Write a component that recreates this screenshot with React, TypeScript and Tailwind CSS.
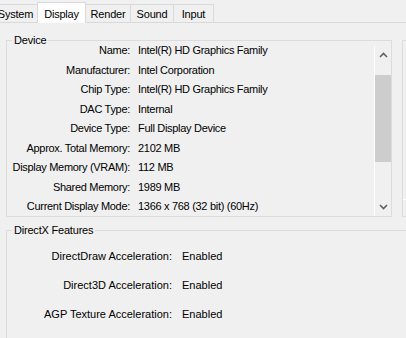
import React from "react";

const deviceRows: [string, string][] = [
  ["Name:", "Intel(R) HD Graphics Family"],
  ["Manufacturer:", "Intel Corporation"],
  ["Chip Type:", "Intel(R) HD Graphics Family"],
  ["DAC Type:", "Internal"],
  ["Device Type:", "Full Display Device"],
  ["Approx. Total Memory:", "2102 MB"],
  ["Display Memory (VRAM):", "112 MB"],
  ["Shared Memory:", "1989 MB"],
  ["Current Display Mode:", "1366 x 768 (32 bit) (60Hz)"],
];

const dxRows: [string, string][] = [
  ["DirectDraw Acceleration:", "Enabled"],
  ["Direct3D Acceleration:", "Enabled"],
  ["AGP Texture Acceleration:", "Enabled"],
];

function Chevron({ up }: { up: boolean }) {
  return (
    <svg width="9" height="6" viewBox="0 0 9 6">
      <path
        d={up ? "M1 5 L4.5 1.5 L8 5" : "M1 1 L4.5 4.5 L8 1"}
        fill="none"
        stroke="#606060"
        strokeWidth="1.6"
      />
    </svg>
  );
}

export default function App() {
  return (
    <div
      className="w-[406px] h-[338px] bg-[#f0f0f0] overflow-hidden text-[11px] tracking-[-0.2px] text-black flex flex-col"
      style={{ fontFamily: '"Liberation Sans", Arial, sans-serif' }}
    >
      {/* Tab strip */}
      <div className="flex items-end h-[22px] shrink-0">
        <div className="ml-[-7px] w-[45px] h-[18px] border border-b-0 border-[#d9d9d9] flex items-center justify-center pt-[1px]">
          System
        </div>
        <div className="relative z-10 ml-[-1px] w-[49px] h-[21px] mb-[-1px] bg-white border border-b-0 border-[#d9d9d9] flex items-start justify-center pt-[3px]">
          Display
        </div>
        <div className="ml-[-1px] w-[46px] h-[18px] border border-b-0 border-[#d9d9d9] flex items-center justify-center pt-[1px]">
          Render
        </div>
        <div className="ml-[-1px] w-[44px] h-[18px] border border-b-0 border-[#d9d9d9] flex items-center justify-center pt-[1px]">
          Sound
        </div>
        <div className="ml-[-1px] w-[41px] h-[18px] border border-b-0 border-[#d9d9d9] flex items-center justify-center pt-[1px]">
          Input
        </div>
      </div>
      <div className="h-px bg-[#d9d9d9] shrink-0" />

      {/* Device group + right box */}
      <div className="flex mt-[17px] shrink-0">
        <div className="relative ml-[6px] w-[386px] h-[177px] border border-[#dcdcdc] flex">
          <span className="absolute left-[5px] top-[-9px] px-[2px] bg-[#f0f0f0] leading-[16px]">
            Device
          </span>
          <div className="flex-1 flex flex-col tracking-[-0.3px]">
            {deviceRows.map(([k, v]) => (
              <div key={k} className="flex items-center h-[19.6px]">
                <div className="w-[123px] text-right whitespace-nowrap">{k}</div>
                <div className="ml-[8px] whitespace-nowrap">{v}</div>
              </div>
            ))}
          </div>
          <div className="mt-[5px] w-[17px] border-l border-white flex flex-col items-center">
            <div className="h-[18px] flex items-center justify-center">
              <Chevron up />
            </div>
            <div className="mt-[11px] w-[16px] h-[87px] bg-[#cdcdcd]" />
            <div className="flex-1" />
            <div className="h-[18px] flex items-center justify-center">
              <Chevron up={false} />
            </div>
          </div>
        </div>
        <div className="ml-[10px] flex-1 h-[177px] border border-r-0 border-[#dcdcdc] flex flex-col justify-end">
          <div className="h-px bg-white mb-[16px]" />
        </div>
      </div>

      {/* DirectX Features group */}
      <div className="relative ml-[6px] mt-[13px] flex-1 border-l border-t border-[#dcdcdc] mr-[-10px]">
        <span className="absolute left-[5px] top-[-9px] px-[2px] bg-[#f0f0f0] leading-[16px]">
          DirectX Features
        </span>
        <div className="flex flex-col pt-[11px] tracking-normal">
          {dxRows.map(([k, v]) => (
            <div key={k} className="flex items-center h-[29px]">
              <div className="w-[165px] text-right whitespace-nowrap">{k}</div>
              <div className="ml-[10px] whitespace-nowrap">{v}</div>
            </div>
          ))}
        </div>
      </div>
    </div>
  );
}
